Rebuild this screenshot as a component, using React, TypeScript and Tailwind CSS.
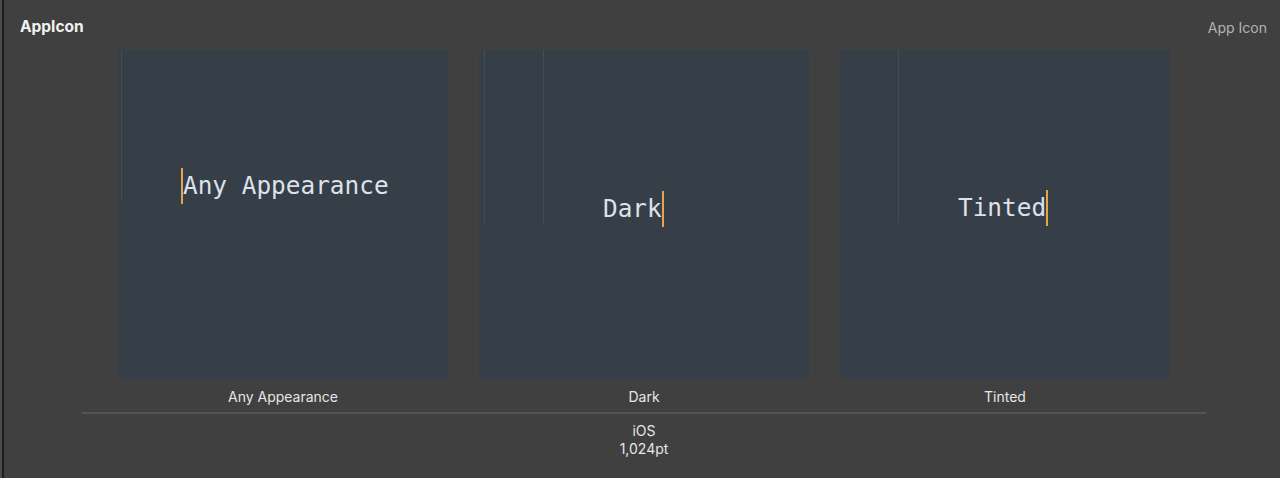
import React from 'react'

interface IconSlotProps {
  text: string
  guides: { left: number; height: number }[]
  padTop: number
  padLeft: number
  caretFirst?: boolean
}

const IconSlot: React.FC<IconSlotProps> = ({ text, guides, padTop, padLeft, caretFirst }) => {
  const caret = <span className="inline-block w-[2px] h-[36px] bg-[#e3a54e]" />
  return (
    <div
      className="relative w-[330px] h-[329px] bg-[#363e48]"
      style={{ paddingTop: padTop, paddingLeft: padLeft }}
    >
      {guides.map((g, i) => (
        <div
          key={i}
          className="absolute top-0 w-px bg-[#424c58]"
          style={{ left: g.left, height: g.height }}
        />
      ))}
      <div className="flex items-center h-[36px] font-['DejaVu_Sans_Mono',monospace] text-[24.4px] text-[#dde2ea]">
        {caretFirst && caret}
        <span className="leading-none">{text}</span>
        {!caretFirst && caret}
      </div>
    </div>
  )
}

export default function App() {
  const labels = ['Any Appearance', 'Dark', 'Tinted']

  return (
    <div className="w-[1280px] h-[478px] bg-[#404040] flex font-['Inter',sans-serif] overflow-hidden">
      <div className="w-[2px] bg-[#4a4a4a]" />
      <div className="w-[2px] bg-[#1c1c1c]" />
      <div className="flex-1 flex flex-col">
        <header className="h-[50px] flex items-start justify-between pl-[16px] pr-[13px] pt-[17px]">
          <h1 className="text-[15.5px] font-bold text-[#f2f2f2] leading-[20px]">AppIcon</h1>
          <span className="text-[14px] text-[#b4b4b4] leading-[20px] pt-[1px]">App Icon</span>
        </header>

        <div className="ml-[78px] w-[1124px] flex flex-col">
          <div className="flex gap-[31px] px-[36px]">
            <IconSlot
              text="Any Appearance"
              guides={[{ left: 3, height: 150 }]}
              padTop={118}
              padLeft={63}
              caretFirst
            />
            <IconSlot
              text="Dark"
              guides={[{ left: 5, height: 173 }, { left: 64, height: 173 }]}
              padTop={141}
              padLeft={124}
            />
            <IconSlot
              text="Tinted"
              guides={[{ left: 58, height: 172 }]}
              padTop={140}
              padLeft={118}
            />
          </div>

          <div className="flex gap-[31px] px-[36px] h-[35px] pt-[4px] pb-[2px] items-center border-b-2 border-[#545454]">
            {labels.map((l) => (
              <div key={l} className="w-[330px] text-center text-[14px] text-[#e6e6e6]">
                {l}
              </div>
            ))}
          </div>

          <div className="flex flex-col items-center pt-[8px] text-[14px] leading-[18px] text-[#e6e6e6]">
            <span>iOS</span>
            <span>1,024pt</span>
          </div>
        </div>
      </div>
    </div>
  )
}
